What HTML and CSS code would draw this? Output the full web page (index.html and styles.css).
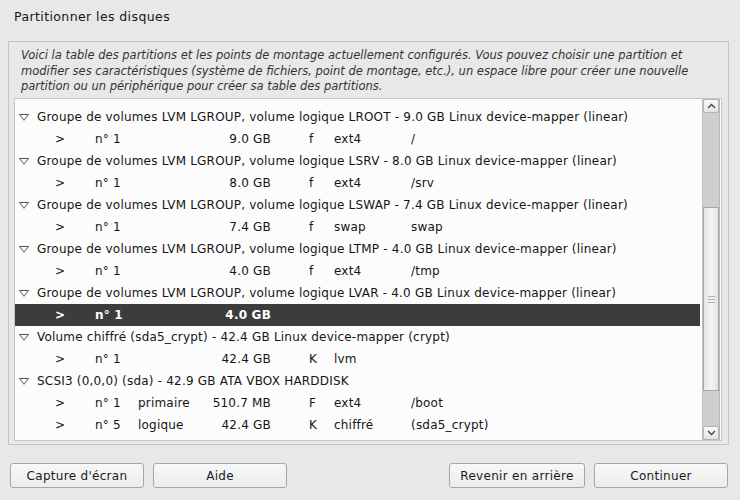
FILE: index.html
```html
<!DOCTYPE html>
<html lang="fr">
<head>
<meta charset="utf-8">
<title>Partitionner les disques</title>
<link rel="stylesheet" href="styles.css">
</head>
<body>
<div class="window">
  <h1 class="title">Partitionner les disques</h1>
  <div class="frame">
    <p class="desc">Voici la table des partitions et les points de montage actuellement configurés. Vous pouvez choisir une partition et modifier ses caractéristiques (système de fichiers, point de montage, etc.), un espace libre pour créer une nouvelle partition ou un périphérique pour créer sa table des partitions.</p>
    <div class="listbox">
      <div class="rows">
        <div class="head"><svg class="tri" width="10" height="7" viewBox="0 0 10 7"><polygon points="0.5,0.5 9.5,0.5 5,6.3" fill="none" stroke="#555" stroke-width="1"/></svg><span>Groupe de volumes LVM LGROUP, volume logique LROOT - 9.0 GB Linux device-mapper (linear)</span></div>
        <div class="part"><span>&gt;</span><span>n° 1</span><span></span><span class="size">9.0 GB</span><span>f</span><span>ext4</span><span>/</span></div>
        <div class="head"><svg class="tri" width="10" height="7" viewBox="0 0 10 7"><polygon points="0.5,0.5 9.5,0.5 5,6.3" fill="none" stroke="#555" stroke-width="1"/></svg><span>Groupe de volumes LVM LGROUP, volume logique LSRV - 8.0 GB Linux device-mapper (linear)</span></div>
        <div class="part"><span>&gt;</span><span>n° 1</span><span></span><span class="size">8.0 GB</span><span>f</span><span>ext4</span><span>/srv</span></div>
        <div class="head"><svg class="tri" width="10" height="7" viewBox="0 0 10 7"><polygon points="0.5,0.5 9.5,0.5 5,6.3" fill="none" stroke="#555" stroke-width="1"/></svg><span>Groupe de volumes LVM LGROUP, volume logique LSWAP - 7.4 GB Linux device-mapper (linear)</span></div>
        <div class="part"><span>&gt;</span><span>n° 1</span><span></span><span class="size">7.4 GB</span><span>f</span><span>swap</span><span>swap</span></div>
        <div class="head"><svg class="tri" width="10" height="7" viewBox="0 0 10 7"><polygon points="0.5,0.5 9.5,0.5 5,6.3" fill="none" stroke="#555" stroke-width="1"/></svg><span>Groupe de volumes LVM LGROUP, volume logique LTMP - 4.0 GB Linux device-mapper (linear)</span></div>
        <div class="part"><span>&gt;</span><span>n° 1</span><span></span><span class="size">4.0 GB</span><span>f</span><span>ext4</span><span>/tmp</span></div>
        <div class="head"><svg class="tri" width="10" height="7" viewBox="0 0 10 7"><polygon points="0.5,0.5 9.5,0.5 5,6.3" fill="none" stroke="#555" stroke-width="1"/></svg><span>Groupe de volumes LVM LGROUP, volume logique LVAR - 4.0 GB Linux device-mapper (linear)</span></div>
        <div class="part selected"><span>&gt;</span><span>n° 1</span><span></span><span class="size">4.0 GB</span><span></span><span></span><span></span></div>
        <div class="head"><svg class="tri" width="10" height="7" viewBox="0 0 10 7"><polygon points="0.5,0.5 9.5,0.5 5,6.3" fill="none" stroke="#555" stroke-width="1"/></svg><span>Volume chiffré (sda5_crypt) - 42.4 GB Linux device-mapper (crypt)</span></div>
        <div class="part"><span>&gt;</span><span>n° 1</span><span></span><span class="size">42.4 GB</span><span>K</span><span>lvm</span><span></span></div>
        <div class="head"><svg class="tri" width="10" height="7" viewBox="0 0 10 7"><polygon points="0.5,0.5 9.5,0.5 5,6.3" fill="none" stroke="#555" stroke-width="1"/></svg><span>SCSI3 (0,0,0) (sda) - 42.9 GB ATA VBOX HARDDISK</span></div>
        <div class="part"><span>&gt;</span><span>n° 1</span><span>primaire</span><span class="size">510.7 MB</span><span>F</span><span>ext4</span><span>/boot</span></div>
        <div class="part"><span>&gt;</span><span>n° 5</span><span>logique</span><span class="size">42.4 GB</span><span>K</span><span>chiffré</span><span>(sda5_crypt)</span></div>
      </div>
      <div class="scrollbar">
        <div class="sbtn up"><svg width="9" height="6" viewBox="0 0 9 6"><polyline points="1,5 4.5,1.5 8,5" fill="none" stroke="#444" stroke-width="1.3"/></svg></div>
        <div class="trough">
          <div class="gap-top"></div>
          <div class="thumb"><div class="grip"></div></div>
          <div class="gap-bottom"></div>
        </div>
        <div class="sbtn down"><svg width="9" height="6" viewBox="0 0 9 6"><polyline points="1,1 4.5,4.5 8,1" fill="none" stroke="#444" stroke-width="1.3"/></svg></div>
      </div>
    </div>
  </div>
  <div class="buttons">
    <div class="group">
      <button class="btn">Capture d'écran</button>
      <button class="btn">Aide</button>
    </div>
    <div class="group right">
      <button class="btn">Revenir en arrière</button>
      <button class="btn">Continuer</button>
    </div>
  </div>
</div>
</body>
</html>
```

FILE: styles.css
```css
html, body {
  margin: 0;
  padding: 0;
  background: #e8e8e8;
}
body {
  width: 740px;
  height: 500px;
  overflow: hidden;
  font-family: "DejaVu Sans", sans-serif;
  color: #151515;
}
.window {
  display: flex;
  flex-direction: column;
}
.title {
  margin: 0;
  padding: 9px 14px 0 14px;
  height: 32px;
  box-sizing: border-box;
  font-size: 12.5px;
  letter-spacing: 0.4px;
  font-weight: normal;
  line-height: 16px;
}
.frame {
  margin: 9px 11px 0 8px;
  height: 404px;
  box-sizing: border-box;
  border: 1px solid #c4c4c4;
  display: flex;
  flex-direction: column;
  padding: 0 6px 3px 5px;
}
.desc {
  margin: 0;
  padding: 6px 6px 0 7px;
  height: 56px;
  box-sizing: border-box;
  font-size: 11.5px;
  font-style: italic;
  line-height: 15.5px;
  color: #333;
}
.listbox {
  flex: 1;
  display: flex;
  background: #fcfcfc;
  border: 1px solid #c6c6c6;
  min-height: 0;
}
.rows {
  flex: 1;
  padding-top: 7px;
  font-size: 12px;
  letter-spacing: 0.2px;
  min-width: 0;
}
.head {
  height: 22px;
  display: flex;
  align-items: center;
  white-space: nowrap;
}
.tri {
  margin-left: 4px;
  margin-right: 8px;
  flex: none;
}
.part {
  height: 22px;
  display: grid;
  grid-template-columns: 40px 43px 70px 63px 63px 77px 1fr;
  align-items: center;
  padding-left: 40px;
  white-space: nowrap;
}
.part span:nth-child(5) {
  padding-left: 38px;
}
.size {
  text-align: right;
}
.part.selected {
  background: #3c3c3c;
  color: #ffffff;
  font-weight: bold;
}
.scrollbar {
  width: 16px;
  margin: 0 1px 0 2px;
  display: flex;
  flex-direction: column;
  border-left: 1px solid #c0c0c0;
  border-right: 1px solid #b8b8b8;
  background: #cfcfcf;
}
.sbtn {
  height: 14px;
  flex: none;
  box-sizing: border-box;
  background: linear-gradient(#fafafa, #e4e4e4);
  border: 1px solid #b4b4b4;
  border-radius: 2px;
  display: flex;
  align-items: center;
  justify-content: center;
}
.trough {
  flex: 1;
  display: flex;
  flex-direction: column;
}
.gap-top {
  height: 94px;
}
.thumb {
  height: 184px;
  box-sizing: border-box;
  border: 1px solid #a8a8a8;
  background: linear-gradient(90deg, #e6e6e6, #f4f4f4 50%, #e2e2e2);
  display: flex;
  align-items: center;
  justify-content: center;
}
.grip {
  width: 7px;
  height: 5px;
  border-top: 1px solid #b0b0b0;
  border-bottom: 1px solid #b0b0b0;
  background: linear-gradient(#b0b0b0, #b0b0b0) center / 7px 1px no-repeat;
}
.gap-bottom {
  flex: 1;
}
.buttons {
  display: flex;
  justify-content: space-between;
  padding: 18px 12px 0 10px;
}
.group {
  display: flex;
  gap: 9px;
}
.group.right {
  gap: 9px;
}
.btn {
  width: 134px;
  height: 25px;
  padding: 0;
  font-family: "DejaVu Sans", sans-serif;
  font-size: 12px;
  letter-spacing: 0.3px;
  color: #1a1a1a;
  background: linear-gradient(#f8f8f8, #ececec);
  border: 1px solid #a6a6a6;
  border-radius: 3px;
}
.group.right .btn:first-child {
  width: 136px;
}
```
